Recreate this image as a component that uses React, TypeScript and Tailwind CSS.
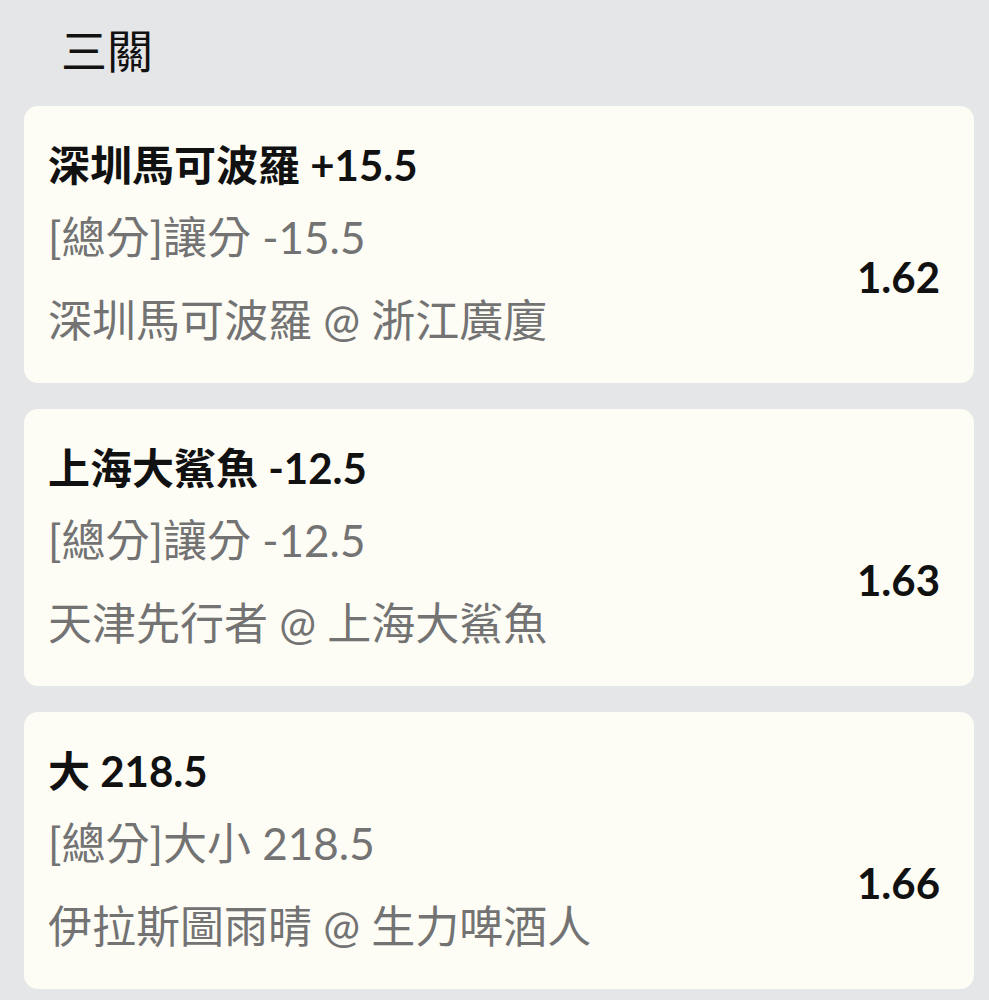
type Leg = {
  pick: string;
  market: string;
  match: string;
  odds: string;
};

const legs: Leg[] = [
  { pick: '深圳馬可波羅 +15.5', market: '[總分]讓分 -15.5', match: '深圳馬可波羅 @ 浙江廣廈', odds: '1.62' },
  { pick: '上海大鯊魚 -12.5', market: '[總分]讓分 -12.5', match: '天津先行者 @ 上海大鯊魚', odds: '1.63' },
  { pick: '大 218.5', market: '[總分]大小 218.5', match: '伊拉斯圖雨晴 @ 生力啤酒人', odds: '1.66' },
];

function LegCard({ leg }: { leg: Leg }) {
  return (
    <div className="rounded-[14px] bg-[#fdfdf6] pl-[24px] pr-[34px] pt-[31px] pb-[20px]">
      <div className="text-[42px] leading-[56px] font-bold text-[#111111] whitespace-nowrap">{leg.pick}</div>
      <div className="mt-[4px] flex items-center justify-between">
        <div className="text-[44px] text-[#737373] whitespace-nowrap">
          <div className="leading-[80px]">{leg.market}</div>
          <div className="leading-[86px]">{leg.match}</div>
        </div>
        <div className="mb-[6px] text-[42px] font-bold text-[#111111]">{leg.odds}</div>
      </div>
    </div>
  );
}

export default function App() {
  return (
    <div className="min-h-screen bg-[#e5e6e8] pl-[24px] pr-[15px] font-['Lato','Noto_Sans_CJK_TC',sans-serif]">
      <div className="h-[100px] mb-[6px] flex items-center pl-[37px] text-[46px] text-[#111111]">三關</div>
      <div className="flex flex-col gap-[26px]">
        {legs.map((leg) => (
          <LegCard key={leg.odds} leg={leg} />
        ))}
      </div>
    </div>
  );
}
